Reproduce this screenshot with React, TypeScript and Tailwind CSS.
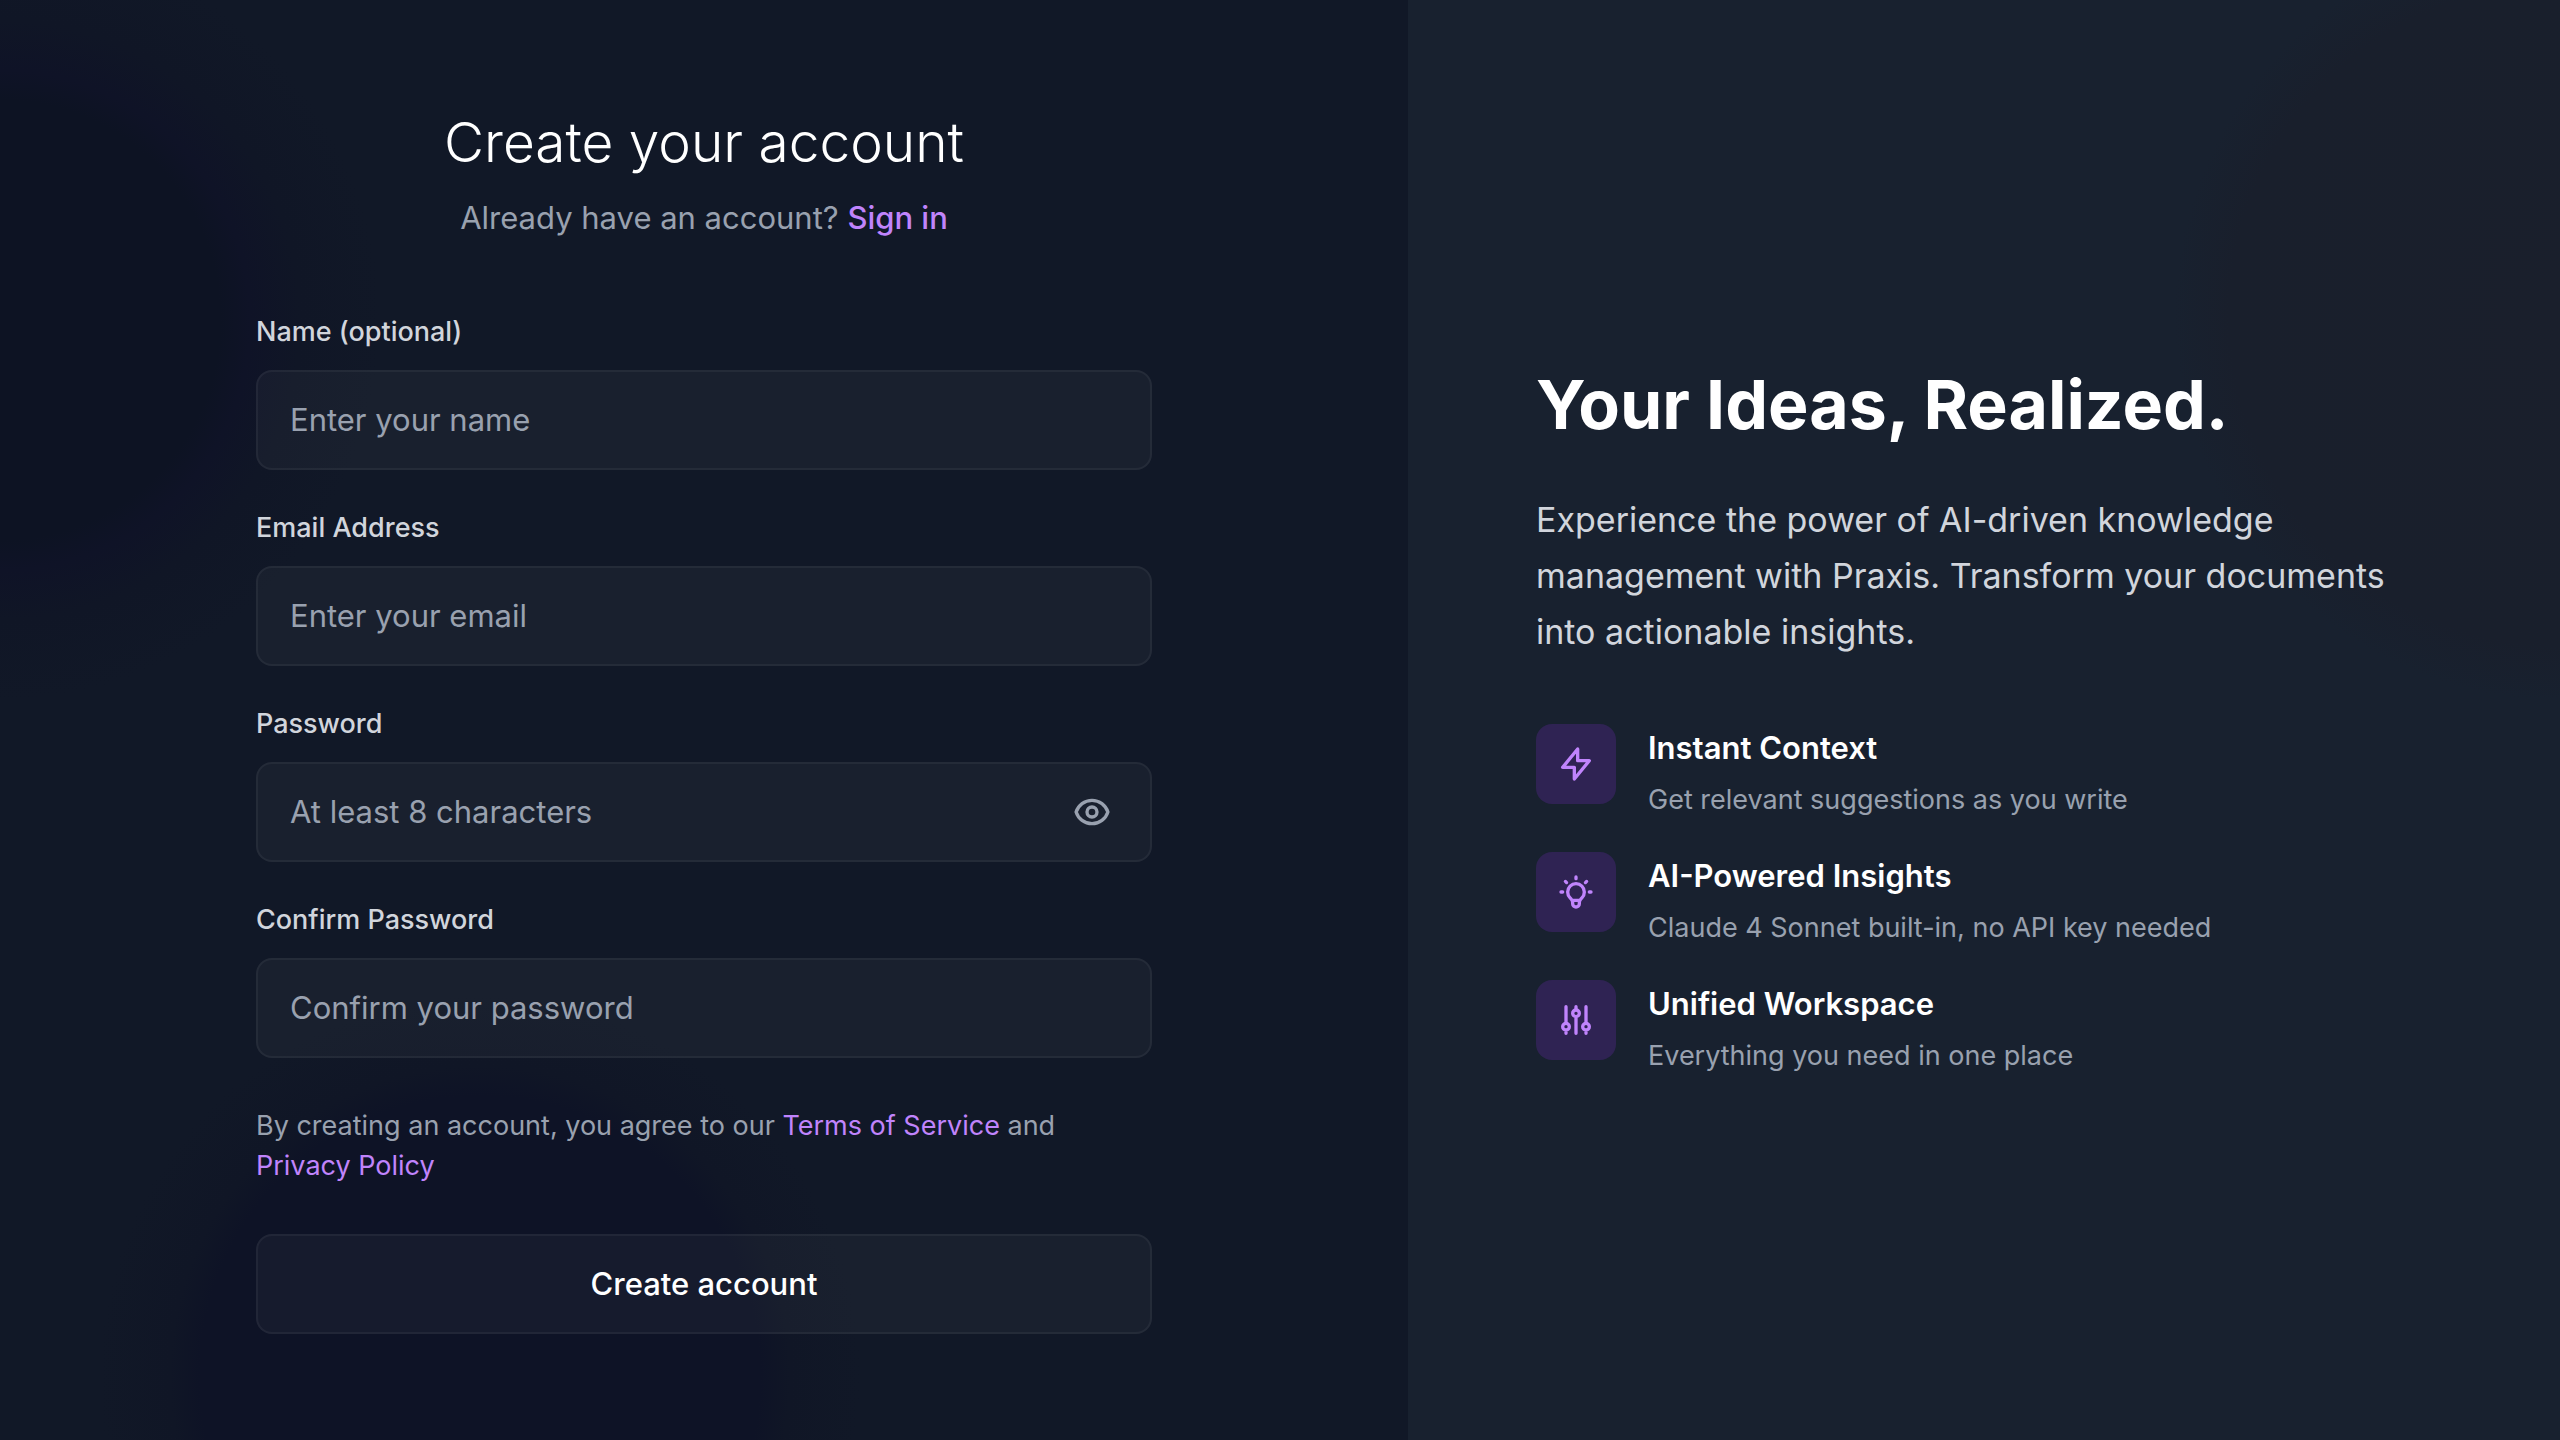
import { useState } from 'react'
import type { ReactNode } from 'react'

type FieldProps = {
  id: string
  label: string
  placeholder: string
  type: string
  children?: ReactNode
}

function Field({ id, label, placeholder, type, children }: FieldProps) {
  return (
    <div>
      <div className="mb-4 text-[31px] leading-[48px]">
        <label htmlFor={id} className="text-[27px] leading-none font-medium text-gray-300">
          {label}
        </label>
      </div>
      <div className="relative">
        <input
          id={id}
          type={type}
          placeholder={placeholder}
          className="block w-full rounded-2xl border-2 border-white/5 bg-white/[0.035] px-8 py-6 text-[31px] leading-[48px] text-white outline-none placeholder:text-gray-400 focus:border-[#c084fc]/50"
        />
        {children}
      </div>
    </div>
  )
}

const iconProps = {
  viewBox: '0 0 24 24',
  fill: 'none',
  stroke: 'currentColor',
  strokeWidth: 2,
  strokeLinecap: 'round' as const,
  strokeLinejoin: 'round' as const,
  'aria-hidden': true,
}

function EyeIcon() {
  return (
    <svg {...iconProps} className="size-10">
      <path d="M15 12a3 3 0 11-6 0 3 3 0 016 0z" />
      <path d="M2.458 12C3.732 7.943 7.523 5 12 5c4.478 0 8.268 2.943 9.542 7-1.274 4.057-5.064 7-9.542 7-4.477 0-8.268-2.943-9.542-7z" />
    </svg>
  )
}

function BoltIcon() {
  return (
    <svg {...iconProps} className="size-10">
      <path d="M13 10V3L4 14h7v7l9-11h-7z" />
    </svg>
  )
}

function BulbIcon() {
  return (
    <svg {...iconProps} className="size-10">
      <path d="M9.663 17h4.673M12 3v1m6.364 1.636l-.707.707M21 12h-1M4 12H3m3.343-5.657l-.707-.707m2.828 9.9a5 5 0 117.072 0l-.548.547A3.374 3.374 0 0014 18.469V19a2 2 0 11-4 0v-.531c0-.895-.356-1.754-.988-2.386l-.548-.547z" />
    </svg>
  )
}

function SlidersIcon() {
  return (
    <svg {...iconProps} className="size-10">
      <path d="M12 6V4m0 2a2 2 0 100 4m0-4a2 2 0 110 4m-6 8a2 2 0 100-4m0 4a2 2 0 110-4m0 4v2m0-6V4m6 6v10m6-2a2 2 0 100-4m0 4a2 2 0 110-4m0 4v2m0-6V4" />
    </svg>
  )
}

const features = [
  { icon: <BoltIcon />, title: 'Instant Context', text: 'Get relevant suggestions as you write' },
  { icon: <BulbIcon />, title: 'AI-Powered Insights', text: 'Claude 4 Sonnet built-in, no API key needed' },
  { icon: <SlidersIcon />, title: 'Unified Workspace', text: 'Everything you need in one place' },
]

export default function App() {
  const [visible, setVisible] = useState(false)
  const passwordType = visible ? 'text' : 'password'

  return (
    <div className="flex min-h-screen bg-[#111827] font-['Inter',sans-serif]">
      <main className="flex w-[55%] items-center justify-center bg-[radial-gradient(circle_at_0_320px,#0d1323_0,#0d1323_220px,#0f1327_250px,#101626_300px,#111827_380px,transparent_380px),radial-gradient(circle_at_480px_calc(100%_-_64px),#0e1326_0,#0e1326_280px,#101626_310px,#111827_380px,transparent_380px)] px-12 py-16">
        <div className="w-full max-w-4xl">
          <header className="mb-16 text-center">
            <h1 className="text-[55px] leading-[72px] font-light text-white">Create your account</h1>
            <p className="mt-4 text-[31px] leading-[48px] text-gray-400">
              Already have an account?{' '}
              <a href="#sign-in" className="font-medium text-[#c084fc]">
                Sign in
              </a>
            </p>
          </header>

          <form className="flex flex-col gap-12" onSubmit={(event) => event.preventDefault()}>
            <div className="flex flex-col gap-8">
              <Field id="name" label="Name (optional)" placeholder="Enter your name" type="text" />
              <Field id="email" label="Email Address" placeholder="Enter your email" type="email" />
              <Field id="password" label="Password" placeholder="At least 8 characters" type={passwordType}>
                <button
                  type="button"
                  aria-label="Show password"
                  onClick={() => setVisible(!visible)}
                  className="absolute inset-y-0 right-0 flex items-center px-10 text-gray-400"
                >
                  <EyeIcon />
                </button>
              </Field>
              <Field
                id="confirm-password"
                label="Confirm Password"
                placeholder="Confirm your password"
                type={passwordType}
              />
            </div>

            <p className="text-[27px] leading-10 text-gray-400">
              By creating an account, you agree to our{' '}
              <a href="#terms" className="text-[#c084fc]">
                Terms of Service
              </a>{' '}
              and{' '}
              <a href="#privacy" className="whitespace-nowrap text-[#c084fc]">
                Privacy Policy
              </a>
            </p>

            <button
              type="submit"
              className="w-full rounded-2xl border-2 border-white/5 bg-white/[0.035] px-8 py-6 text-[31px] leading-[48px] font-medium text-white"
            >
              Create account
            </button>
          </form>
        </div>
      </main>

      <aside className="flex flex-1 items-center bg-[#18212f] bg-[radial-gradient(circle_at_100%_315px,#1a1f2c_0,#191f2c_330px,#18212f_385px,transparent_385px)] px-32">
        <div className="w-full max-w-4xl">
          <h2 className="mb-12 text-[68px] leading-[80px] font-bold text-white">Your Ideas, Realized.</h2>
          <p className="mb-16 text-[34px] leading-[56px] text-gray-300">
            Experience the power of AI-driven knowledge management with Praxis. Transform your documents into
            actionable insights.
          </p>
          <ul className="flex flex-col gap-8">
            {features.map((feature) => (
              <li key={feature.title} className="flex items-start gap-8">
                <div className="flex size-20 shrink-0 items-center justify-center rounded-2xl bg-[#2f2353] text-[#c084fc]">
                  {feature.icon}
                </div>
                <div>
                  <h3 className="mb-2 text-[31px] leading-[48px] font-semibold text-white">{feature.title}</h3>
                  <p className="text-[27px] leading-10 text-gray-400">{feature.text}</p>
                </div>
              </li>
            ))}
          </ul>
        </div>
      </aside>
    </div>
  )
}
